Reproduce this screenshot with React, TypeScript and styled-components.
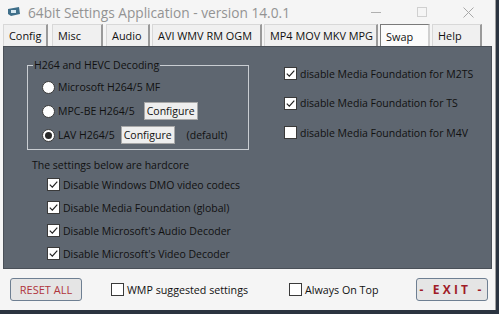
import React from 'react';
import styled, { createGlobalStyle } from 'styled-components';

const Global = createGlobalStyle`
  html, body { margin: 0; padding: 0; background: #2b3440; }
  body { font-family: "Open Sans", "Noto Sans", sans-serif; }
`;

const Window = styled.div`
  width: 496px;
  height: 310px;
  background: #f5f5f5;
  border-right: 1px solid #a0a0a0;
  box-sizing: border-box;
  display: flex;
  flex-direction: column;
  font-size: 10.5px;
  color: #111;
  overflow: hidden;
`;

const TitleBar = styled.div`
  height: 24px;
  flex-shrink: 0;
  display: flex;
  align-items: center;
  padding: 0 4px 0 7px;
  color: #939393;
  font-size: 13.7px;
`;

const TitleText = styled.span`
  margin-left: 7px;
  flex: 1;
  white-space: nowrap;
`;

const WinButton = styled.div<{ $w: number }>`
  width: ${p => p.$w}px;
  height: 24px;
  display: flex;
  align-items: center;
  justify-content: center;
`;

const Tabs = styled.div`
  display: flex;
  padding-left: 3px;
  height: 22px;
  flex-shrink: 0;
`;

const Tab = styled.div<{ $active?: boolean; $w: number; $gap: number }>`
  width: ${p => p.$w}px;
  margin-right: ${p => p.$gap}px;
  box-sizing: border-box;
  padding: ${p => (p.$active ? '2px 0 0 5px' : '0 0 0 5px')};
  height: 22px;
  display: flex;
  align-items: center;
  background: ${p => (p.$active ? '#fbfbfb' : '#f0f0f0')};
  border-top: 1px solid ${p => (p.$active ? '#7a7a7a' : '#d8d8d8')};
  border-left: 1px solid ${p => (p.$active ? '#7a7a7a' : '#d8d8d8')};
  border-right: 2px solid ${p => (p.$active ? '#d0d0d0' : '#9a9a9a')};
  font-size: 10.9px;
  white-space: nowrap;
`;

const Panel = styled.div`
  margin: 0 3px 0 3px;
  height: 223px;
  flex-shrink: 0;
  background: #5e6670;
  border: 1px solid #4a5058;
  display: flex;
  padding: 11px 0 0 23px;
  box-sizing: border-box;
`;

const LeftCol = styled.div`
  width: 257px;
  display: flex;
  flex-direction: column;
`;

const Group = styled.fieldset`
  margin: 0;
  width: 222px;
  box-sizing: border-box;
  border: 1px solid #c9cdd2;
  padding: 3px 0 2px 14px;
  display: flex;
  flex-direction: column;
`;

const Legend = styled.legend`
  padding: 0 1px;
  margin-left: -9px;
  line-height: 14px;
`;

const Row = styled.label<{ $h?: number }>`
  display: flex;
  align-items: center;
  height: ${p => p.$h ?? 19}px;
  white-space: nowrap;
`;

const Radio = styled.span<{ $on?: boolean }>`
  width: 13px;
  height: 13px;
  border-radius: 50%;
  background: #fff;
  border: 1px solid #3a3a3a;
  box-sizing: border-box;
  margin-right: 3px;
  display: flex;
  align-items: center;
  justify-content: center;
  &::after {
    content: '';
    width: 7px;
    height: 7px;
    border-radius: 50%;
    background: ${p => (p.$on ? '#2a2a2a' : 'transparent')};
  }
`;

const SmallButton = styled.span<{ $gap: number }>`
  margin-left: ${p => p.$gap}px;
  background: #eeeeee;
  border: 1px solid #a8a8a8;
  padding: 0 2px;
  height: 16px;
  display: flex;
  align-items: center;
`;

const Note = styled.span`
  margin-left: 12px;
`;

const Heading = styled.div`
  margin: 8px 0 0 5px;
  line-height: 15px;
`;

const CheckList = styled.div<{ $indent: number; $gap: number; $top: number }>`
  display: flex;
  flex-direction: column;
  padding: ${p => p.$top}px 0 0 ${p => p.$indent}px;
  gap: ${p => p.$gap}px;
`;

const Box = styled.span`
  width: 13px;
  height: 13px;
  background: #fff;
  border: 1px solid #3a3a3a;
  box-sizing: border-box;
  margin-right: 3px;
  flex-shrink: 0;
  display: flex;
  align-items: center;
  justify-content: center;
`;

const Footer = styled.div`
  flex: 1;
  display: flex;
  align-items: center;
  padding: 0 7px 0 10px;
  font-size: 10.7px;
`;

const BigButton = styled.div<{ $spaced?: boolean }>`
  width: 72px;
  height: 23px;
  box-sizing: border-box;
  border: 1px solid #6e7f92;
  border-radius: 3px;
  background: #e5e5e5;
  color: ${p => (p.$spaced ? '#a01c28' : '#b0343c')};
  display: flex;
  align-items: center;
  justify-content: center;
  font-size: ${p => (p.$spaced ? 12 : 11)}px;
  font-weight: ${p => (p.$spaced ? 700 : 400)};
  letter-spacing: ${p => (p.$spaced ? '3.2px' : '0')};
  white-space: pre;
`;

const FooterCheck = styled(Row)<{ $gap: number }>`
  margin-left: ${p => p.$gap}px;
`;

const Spacer = styled.span`
  flex: 1;
`;

const Tick = () => (
  <svg width="11" height="11" viewBox="0 0 11 11">
    <path d="M1.8 5.6 L4.3 8.1 L9.3 2.6" fill="none" stroke="#222" strokeWidth="1.2" />
  </svg>
);

const Check = ({ on, label, h }: { on?: boolean; label: string; h?: number }) => (
  <Row $h={h}>
    <Box>{on && <Tick />}</Box>
    {label}
  </Row>
);

const AppIcon = () => (
  <svg width="14" height="12" viewBox="0 0 14 12">
    <path d="M1 3 L12 1 L13 8 L4 10 L1 8 Z" fill="#3f6f8a" />
    <rect x="4" y="4" width="5" height="3" fill="#d6e7f0" />
  </svg>
);

const tabs = [
  { name: 'Config', w: 45, gap: 4 },
  { name: 'Misc', w: 51, gap: 3 },
  { name: 'Audio', w: 44, gap: 2 },
  { name: 'AVI WMV RM OGM', w: 110, gap: 2 },
  { name: 'MP4 MOV MKV MPG', w: 114, gap: 2 },
  { name: 'Swap', w: 50, gap: 2 },
  { name: 'Help', w: 50, gap: 0 },
];

const App: React.FC = () => (
  <>
    <Global />
    <Window>
      <TitleBar>
        <AppIcon />
        <TitleText>64bit Settings Application - version 14.0.1</TitleText>
        <WinButton $w={46}>
          <svg width="10" height="10"><path d="M0 5.5 H10" stroke="#b0b0b0" /></svg>
        </WinButton>
        <WinButton $w={46}>
          <svg width="10" height="10"><rect x="0.5" y="0.5" width="9" height="9" fill="none" stroke="#d0d0d0" /></svg>
        </WinButton>
        <WinButton $w={46}>
          <svg width="11" height="11"><path d="M0.5 0.5 L10.5 10.5 M10.5 0.5 L0.5 10.5" stroke="#a8a8a8" /></svg>
        </WinButton>
      </TitleBar>
      <Tabs>
        {tabs.map(t => (
          <Tab key={t.name} $w={t.w} $gap={t.gap} $active={t.name === 'Swap'}>{t.name}</Tab>
        ))}
      </Tabs>
      <Panel>
        <LeftCol>
          <Group>
            <Legend>H264 and HEVC Decoding</Legend>
            <Row $h={24}><Radio />Microsoft H264/5 MF</Row>
            <Row $h={24}><Radio />MPC-BE H264/5<SmallButton $gap={9}>Configure</SmallButton></Row>
            <Row $h={24}><Radio $on />LAV H264/5<SmallButton $gap={6}>Configure</SmallButton><Note>(default)</Note></Row>
          </Group>
          <Heading>The settings below are hardcore</Heading>
          <CheckList $indent={20} $gap={0} $top={0}>
            <Check on h={23} label="Disable Windows DMO video codecs" />
            <Check on h={23} label="Disable Media Foundation (global)" />
            <Check on h={23} label="Disable Microsoft's Audio Decoder" />
            <Check on h={23} label="Disable Microsoft's Video Decoder" />
          </CheckList>
        </LeftCol>
        <CheckList $indent={0} $gap={10.5} $top={6}>
          <Check on label="disable Media Foundation for M2TS" />
          <Check on label="disable Media Foundation for TS" />
          <Check label="disable Media Foundation for M4V" />
        </CheckList>
      </Panel>
      <Footer>
        <BigButton>RESET ALL</BigButton>
        <FooterCheck $gap={29}><Box />WMP suggested settings</FooterCheck>
        <FooterCheck $gap={41}><Box />Always On Top</FooterCheck>
        <Spacer />
        <BigButton $spaced>{'- EXIT -'}</BigButton>
      </Footer>
    </Window>
  </>
);

export default App;
